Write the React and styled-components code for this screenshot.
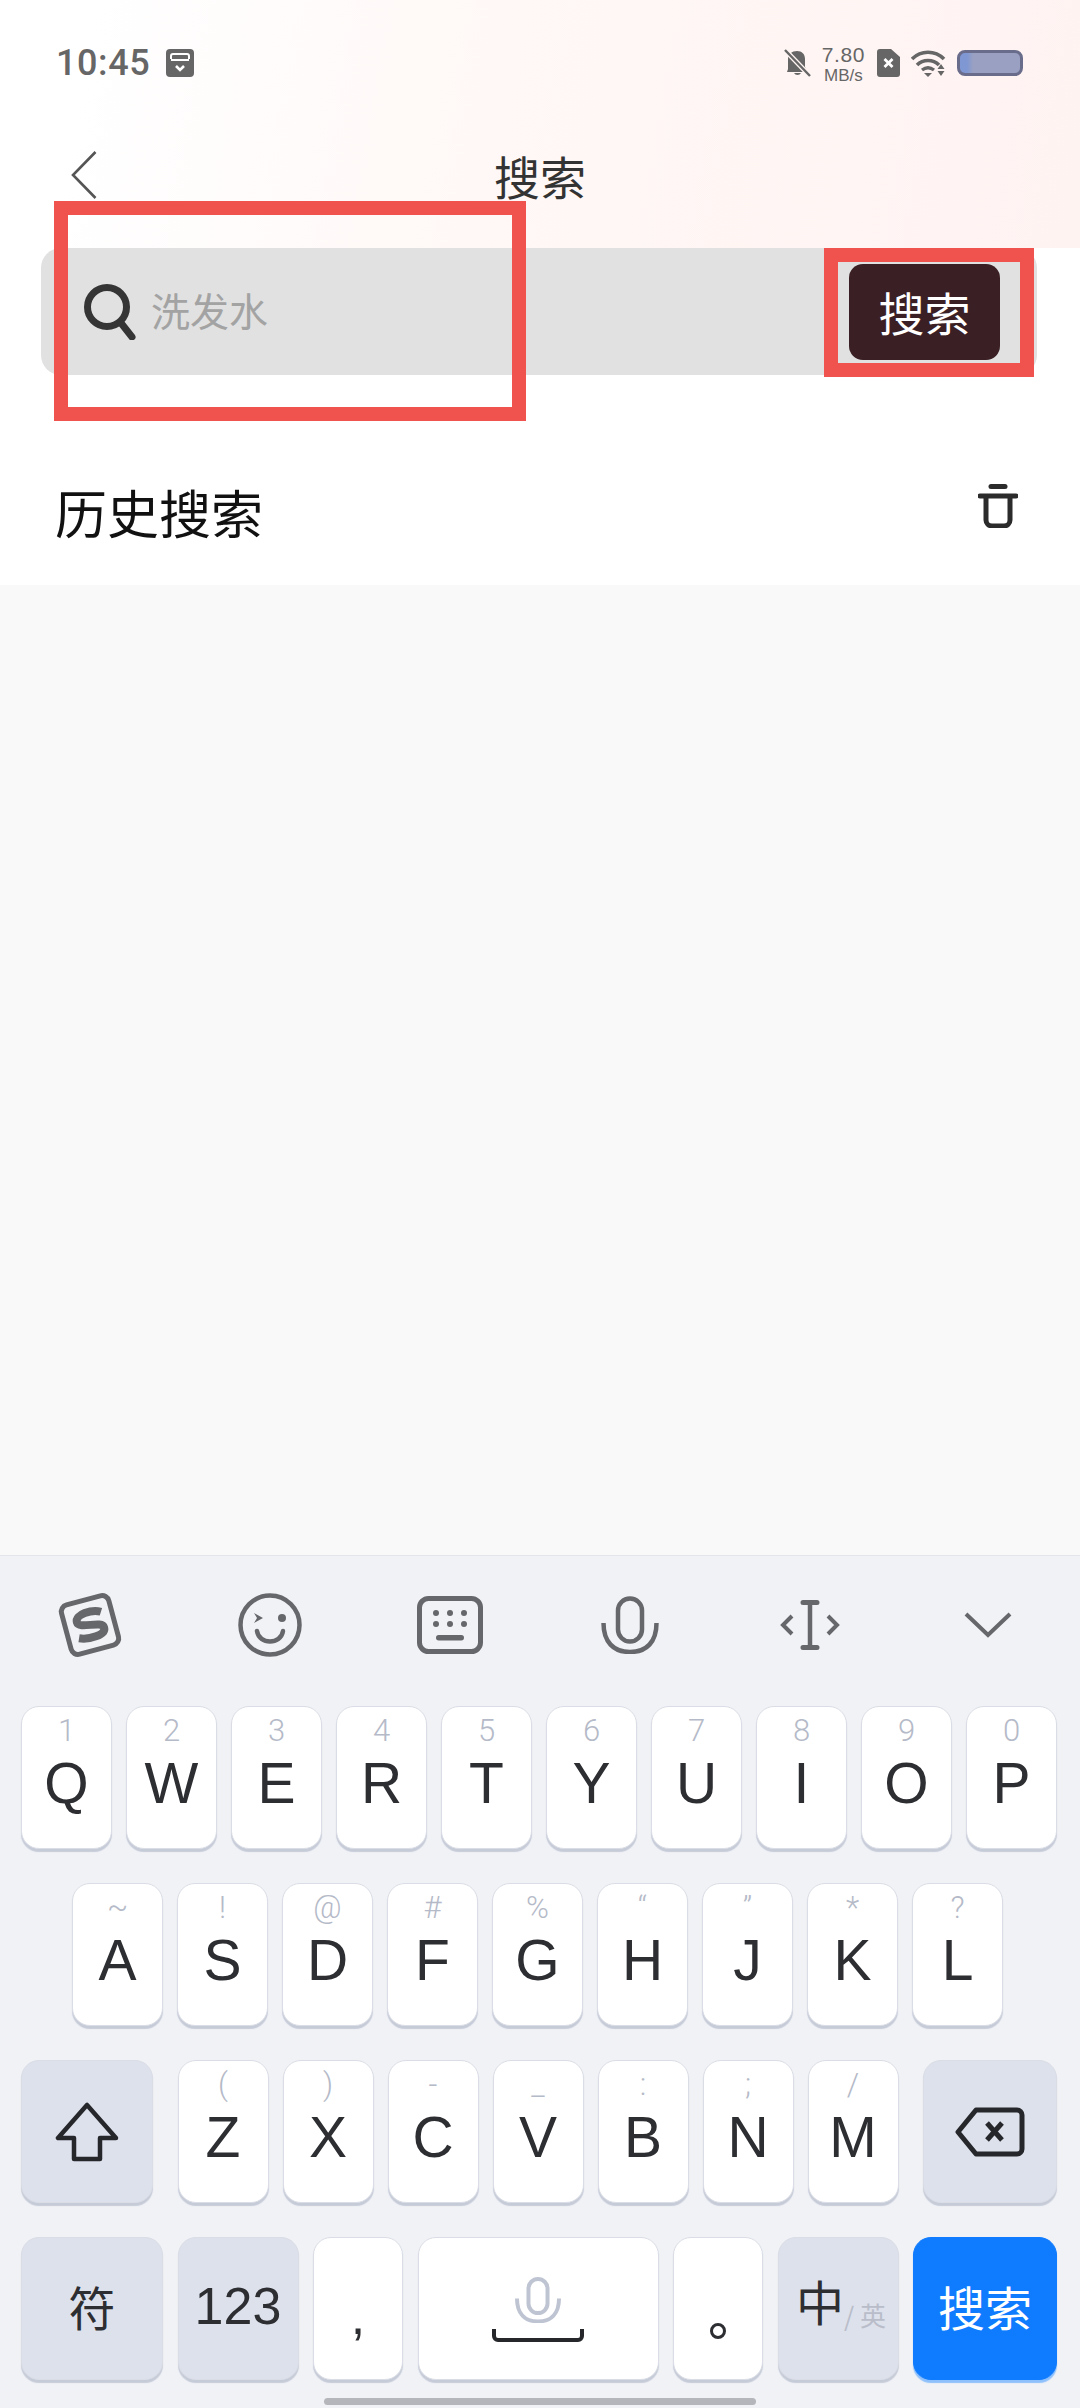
import React from "react";
import styled, { createGlobalStyle } from "styled-components";

const GlobalStyle = createGlobalStyle`
  html, body {
    margin: 0;
    padding: 0;
    background: #fff;
  }
  * {
    box-sizing: border-box;
  }
`;

const CJK = `"Noto Sans CJK SC", "Noto Sans", sans-serif`;
const LATIN = `"Liberation Sans", "Noto Sans CJK SC", sans-serif`;

const Page = styled.div`
  position: relative;
  width: 1080px;
  height: 2408px;
  display: flex;
  flex-direction: column;
  overflow: hidden;
  background: #f9f9f9;
  font-family: ${CJK};
`;

const Header = styled.header`
  height: 248px;
  flex: none;
  background: linear-gradient(100deg, #ffffff 8%, #fff8f6 45%, #fff3f2 100%);
`;

const StatusBar = styled.div`
  height: 126px;
  padding: 47px 57px 0 56px;
  display: flex;
  align-items: flex-start;
  justify-content: space-between;
  color: #666;
`;

const StatusLeft = styled.div`
  display: flex;
  align-items: center;
  gap: 16px;
`;

const Time = styled.span`
  font-family: Roboto, sans-serif;
  font-size: 36px;
  line-height: 32px;
  font-weight: 500;
  letter-spacing: 0.6px;
`;

const StatusRight = styled.div`
  display: flex;
  align-items: center;
  height: 32px;
`;

const Speed = styled.div`
  display: flex;
  flex-direction: column;
  align-items: center;
  margin: 2px 12px 0 11px;
  font-family: "Liberation Sans", sans-serif;
  font-size: 21px;
  line-height: 21px;
  letter-spacing: 0.6px;
  color: #666;
`;

const SpeedUnit = styled.span`
  margin-top: 1px;
  font-size: 17px;
  line-height: 19px;
  letter-spacing: 0;
`;

const StatusGap = styled.span`
  width: 11px;
`;

const Battery = styled.div`
  width: 66px;
  height: 26px;
  margin-left: 11px;
  border: 3px solid #6a6c8c;
  border-radius: 8px;
  background: linear-gradient(90deg, #7f97d3 0 12%, #9aa0c2 22%);
`;

const NavBar = styled.div`
  height: 122px;
  padding: 0 0 0 71px;
  display: flex;
  align-items: flex-start;
`;

const BackWrap = styled.div`
  margin-top: 25px;
  line-height: 0;
`;

const Title = styled.h1`
  flex: 1;
  margin: 19px 97px 0 0;
  text-align: center;
  font-size: 46px;
  line-height: 60px;
  font-weight: 400;
  color: #333;
`;

const Body = styled.section`
  height: 337px;
  flex: none;
  background: #fff;
`;

const SearchBar = styled.div`
  height: 127px;
  margin: 0 43px 0 41px;
  padding: 0 37px 0 43px;
  display: flex;
  align-items: center;
  border-radius: 20px;
  background: #e1e1e1;
`;

const Placeholder = styled.span`
  flex: 1;
  margin: 0 0 5px 15px;
  font-size: 39px;
  line-height: 54px;
  color: #a3a3a3;
`;

const SearchButton = styled.button`
  width: 151px;
  height: 96px;
  margin-top: 1px;
  padding: 0 0 2px 0;
  border: none;
  border-radius: 14px;
  background: #3a2025;
  color: #fff;
  font-family: ${CJK};
  font-size: 46px;
`;

const HistoryRow = styled.div`
  padding: 0 62px 0 55px;
  height: 210px;
  display: flex;
  align-items: flex-start;
  justify-content: space-between;
`;

const HistoryTitle = styled.h2`
  margin: 99px 0 0 0;
  font-size: 52px;
  line-height: 76px;
  font-weight: 400;
  color: #111;
`;

const TrashIcon = styled.svg`
  margin-top: 109px;
`;

const Filler = styled.div`
  flex: 1;
`;

const Keyboard = styled.div`
  flex: none;
  height: 853px;
  border-top: 1px solid #e3e5ea;
  background: #f0f2f6;
  position: relative;
`;

const Toolbar = styled.div`
  height: 150px;
  display: grid;
  grid-template-columns: repeat(6, 180px);
  align-items: center;
  justify-items: center;
  padding-bottom: 12px;
`;

const ChevronWrap = styled.div`
  margin-right: 4px;
  line-height: 0;
`;

const Rows = styled.div`
  display: flex;
  flex-direction: column;
  gap: 34px;
  padding: 0 23px 0 21px;
`;

const Row = styled.div`
  display: flex;
  justify-content: ${(p) => p.$justify || "flex-start"};
  gap: ${(p) => p.$gap || 14}px;
  height: 143px;
  padding-right: ${(p) => p.$pr || 0}px;
`;

const Key = styled.div`
  flex: none;
  width: ${(p) => p.$w || 91}px;
  height: 143px;
  display: flex;
  flex-direction: column;
  align-items: center;
  border: 1px solid ${(p) => (p.$blue ? "#0f7bff" : "#dadde5")};
  border-radius: 18px;
  background: ${(p) => (p.$blue ? "#0f7bff" : p.$dark ? "#dde1ec" : "#fff")};
  box-shadow: 0 3px 1px ${(p) => (p.$blue ? "#8ec0fb" : "#c6cbd8")};
  color: #2d2e32;
`;

const CenterKey = styled(Key)`
  justify-content: center;
`;

const SubLabel = styled.span`
  margin-top: 9px;
  height: 30px;
  font-family: Roboto, sans-serif;
  font-weight: 300;
  font-size: 31px;
  line-height: 30px;
  color: #b5bac8;
`;

const Letter = styled.span`
  margin-top: 8px;
  font-family: ${LATIN};
  font-size: 57px;
  line-height: 58px;
`;

const SymbolKeyLabel = styled.span`
  margin-bottom: 6px;
  font-family: ${(p) => (p.$latin ? LATIN : CJK)};
  font-size: ${(p) => p.$size || 47}px;
  line-height: 60px;
  color: ${(p) => p.$color || "#2d2e32"};
`;

const Punct = styled.span`
  margin-top: ${(p) => p.$top}px;
  font-family: ${LATIN};
  font-size: 52px;
  line-height: 40px;
`;

const PeriodMark = styled.svg`
  margin-top: 84px;
`;

const LangLabel = styled.div`
  display: flex;
  align-items: flex-end;
  margin: 0 0 18px 6px;
`;

const LangMain = styled.span`
  font-size: 48px;
  line-height: 60px;
  color: #2d2e32;
`;

const LangSub = styled.span`
  font-size: 26px;
  line-height: 34px;
  margin-bottom: -2px;
  color: #b9bdc9;
`;

const SpaceMark = styled.div`
  display: flex;
  flex-direction: column;
  align-items: center;
  gap: 6px;
  margin-top: 39px;
`;

const HomeBar = styled.div`
  position: absolute;
  left: 324px;
  bottom: 3px;
  width: 432px;
  height: 7px;
  border-radius: 4px;
  background: #b5b6bb;
`;

const Annotation = styled.div`
  position: absolute;
  left: ${(p) => p.$x}px;
  top: ${(p) => p.$y}px;
  width: ${(p) => p.$w}px;
  height: ${(p) => p.$h}px;
  border: 14px solid #f0534e;
  pointer-events: none;
`;

const GRAY = "#66676b";

const SaveIcon = () => (
  <svg width="28" height="28" viewBox="0 0 28 28">
    <rect x="0" y="0" width="28" height="28" rx="4" fill="#666" />
    <path d="M5 10V7a2 2 0 0 1 2-2h14a2 2 0 0 1 2 2v3" fill="none" stroke="#fff" strokeWidth="2" />
    <path d="M5 11h18" stroke="#fff" strokeWidth="2" />
    <path d="M10 17l4 4 4-4" fill="none" stroke="#fff" strokeWidth="2.6" />
  </svg>
);

const MuteBell = () => (
  <svg width="27" height="30" viewBox="0 0 27 30">
    <path d="M13 3c5 0 8 3 8 8v8l3 5H3l1-3V11c0-5 4-8 9-8z" fill="#666" />
    <path d="M10 25a4 4 0 0 0 7 0z" fill="#666" />
    <path d="M1 2l25 26" stroke="#fff5f3" strokeWidth="5" />
    <path d="M1 2l25 26" stroke="#666" strokeWidth="2.4" />
  </svg>
);

const SimIcon = () => (
  <svg width="23" height="28" viewBox="0 0 23 28">
    <path d="M3 0h11l9 8v17a3 3 0 0 1-3 3H3a3 3 0 0 1-3-3V3a3 3 0 0 1 3-3z" fill="#666" />
    <path d="M7.500 10l8 8M15.500 10l-8 8" stroke="#fff" strokeWidth="2.8" />
  </svg>
);

const WifiIcon = () => (
  <svg width="35" height="27" viewBox="0 0 35 27">
    <path d="M1 9c9-9 23-9 32 0" fill="none" stroke="#666" strokeWidth="3.6" />
    <path d="M6 15c6-6 16-6 22 0" fill="none" stroke="#666" strokeWidth="3.6" />
    <path d="M11 20c4-3 8-3 12 0" fill="none" stroke="#666" strokeWidth="3.4" />
    <path d="M13 23h8l-4 4z" fill="#666" />
    <path d="M30 14l3.500 5h-7zM26.500 21h7L30 26z" fill="#666" />
  </svg>
);

const BackIcon = () => (
  <svg width="26" height="48" viewBox="0 0 26 48">
    <path d="M24.500 1L2 24l22.500 23" fill="none" stroke="#555" strokeWidth="2.6" />
  </svg>
);

const SearchIcon = () => (
  <svg width="52" height="56" viewBox="0 0 52 56">
    <circle cx="23" cy="23" r="19.500" fill="none" stroke="#353535" strokeWidth="7" />
    <path d="M37 39l11 14" stroke="#353535" strokeWidth="7" strokeLinecap="round" />
  </svg>
);

const TrashSvg = () => (
  <TrashIcon width="40" height="44" viewBox="0 0 40 44">
    <path d="M13 2.500h14" stroke="#2b2b2b" strokeWidth="5" strokeLinecap="round" />
    <path d="M2 12h36" stroke="#2b2b2b" strokeWidth="5" strokeLinecap="round" />
    <path d="M8 12v24a6 6 0 0 0 6 6h12a6 6 0 0 0 6-6V12" fill="none" stroke="#2b2b2b" strokeWidth="5" />
  </TrashIcon>
);

const SogouIcon = () => (
  <svg width="72" height="68" viewBox="0 0 72 68">
    <g transform="rotate(-15 36 34)">
      <rect x="11.500" y="8.500" width="49" height="51" rx="7" fill="none" stroke={GRAY} strokeWidth="5" />
      <path d="M50 24C42 19 24 20 24 28c0 8 25 4 25 12 0 8-18 8-27 4" fill="none" stroke={GRAY} strokeWidth="8" />
    </g>
  </svg>
);

const WinkIcon = () => (
  <svg width="64" height="64" viewBox="0 0 64 64">
    <circle cx="32" cy="32" r="29.500" fill="none" stroke={GRAY} strokeWidth="4.500" />
    <path d="M16 20l9 5-9 5 3-5z" fill={GRAY} />
    <circle cx="44" cy="25" r="4" fill={GRAY} />
    <path d="M19 38c2 14 24 14 26 0" fill="none" stroke={GRAY} strokeWidth="4.500" strokeLinecap="round" />
  </svg>
);

const KeyboardIcon = () => (
  <svg width="66" height="58" viewBox="0 0 66 58">
    <rect x="2.500" y="2.500" width="61" height="53" rx="9" fill="none" stroke={GRAY} strokeWidth="5" />
    {[19, 33, 47].map((x) => (
      <React.Fragment key={x}>
        <circle cx={x} cy="17" r="3" fill={GRAY} />
        <circle cx={x} cy="28" r="3" fill={GRAY} />
      </React.Fragment>
    ))}
    <rect x="19" y="39" width="28" height="5.500" rx="2.700" fill={GRAY} />
  </svg>
);

const MicIcon = ({ color = GRAY, w = 58, h = 58, sw = 4.500 }) => (
  <svg width={w} height={h} viewBox="0 0 58 58">
    <rect x="17" y="2.500" width="24" height="43" rx="12" fill="none" stroke={color} strokeWidth={sw} />
    <path d="M2.500 27c0 19 10 29 26.500 29S55.500 46 55.500 27" fill="none" stroke={color} strokeWidth={sw} />
  </svg>
);

const CursorIcon = () => (
  <svg width="60" height="50" viewBox="0 0 60 50">
    <path d="M23 2.500h14M23 47.500h14" stroke={GRAY} strokeWidth="5" strokeLinecap="round" />
    <path d="M30 3v44" stroke={GRAY} strokeWidth="4.500" />
    <path d="M12 16l-9 9 9 9M48 16l9 9-9 9" fill="none" stroke={GRAY} strokeWidth="4" />
  </svg>
);

const ChevronIcon = () => (
  <svg width="48" height="26" viewBox="0 0 48 26">
    <path d="M2 2l22 21L46 2" fill="none" stroke={GRAY} strokeWidth="4" />
  </svg>
);

const ShiftIcon = () => (
  <svg width="64" height="60" viewBox="0 0 64 60">
    <path d="M32 3L3 36h16v21h26V36h16z" fill="none" stroke="#26272b" strokeWidth="4.500" strokeLinejoin="round" />
  </svg>
);

const BackspaceIcon = () => (
  <svg width="70" height="50" viewBox="0 0 70 50">
    <path d="M21 3h41a5 5 0 0 1 5 5v34a5 5 0 0 1-5 5H21L3 25z" fill="none" stroke="#26272b" strokeWidth="5" strokeLinejoin="round" />
    <path d="M32 16l15 17M47 16L32 33" stroke="#26272b" strokeWidth="5" />
  </svg>
);

const SpaceBracket = () => (
  <svg width="92" height="14" viewBox="0 0 92 14">
    <path d="M2 0v7a4 4 0 0 0 4 4h80a4 4 0 0 0 4-4V0" fill="none" stroke="#26272b" strokeWidth="4" />
  </svg>
);

const ROW_1 = [["1", "Q"], ["2", "W"], ["3", "E"], ["4", "R"], ["5", "T"], ["6", "Y"], ["7", "U"], ["8", "I"], ["9", "O"], ["0", "P"]];
const ROW_2 = [["~", "A"], ["!", "S"], ["@", "D"], ["#", "F"], ["%", "G"], ["“", "H"], ["”", "J"], ["*", "K"], ["?", "L"]];
const ROW_3 = [["(", "Z"], [")", "X"], ["-", "C"], ["_", "V"], [":", "B"], [";", "N"], ["/", "M"]];

const LetterKey = ({ sub, label }) => (
  <Key>
    <SubLabel>{sub}</SubLabel>
    <Letter>{label}</Letter>
  </Key>
);

export default function App() {
  return (
    <Page>
      <GlobalStyle />
      <Header>
        <StatusBar>
          <StatusLeft>
            <Time>10:45</Time>
            <SaveIcon />
          </StatusLeft>
          <StatusRight>
            <MuteBell />
            <Speed>
              <span>7.80</span>
              <SpeedUnit>MB/s</SpeedUnit>
            </Speed>
            <SimIcon />
            <StatusGap />
            <WifiIcon />
            <Battery />
          </StatusRight>
        </StatusBar>
        <NavBar>
          <BackWrap>
            <BackIcon />
          </BackWrap>
          <Title>搜索</Title>
        </NavBar>
      </Header>

      <Body>
        <SearchBar>
          <SearchIcon />
          <Placeholder>洗发水</Placeholder>
          <SearchButton>搜索</SearchButton>
        </SearchBar>
        <HistoryRow>
          <HistoryTitle>历史搜索</HistoryTitle>
          <TrashSvg />
        </HistoryRow>
      </Body>

      <Filler />

      <Keyboard>
        <Toolbar>
          <SogouIcon />
          <WinkIcon />
          <KeyboardIcon />
          <MicIcon />
          <CursorIcon />
          <ChevronWrap>
            <ChevronIcon />
          </ChevronWrap>
        </Toolbar>
        <Rows>
          <Row>
            {ROW_1.map(([sub, label]) => (
              <LetterKey key={label} sub={sub} label={label} />
            ))}
          </Row>
          <Row $justify="center" $pr={3}>
            {ROW_2.map(([sub, label]) => (
              <LetterKey key={label} sub={sub} label={label} />
            ))}
          </Row>
          <Row $justify="space-between">
            <CenterKey $w={132} $dark>
              <ShiftIcon />
            </CenterKey>
            <Row>
              {ROW_3.map(([sub, label]) => (
                <LetterKey key={label} sub={sub} label={label} />
              ))}
            </Row>
            <CenterKey $w={134} $dark>
              <BackspaceIcon />
            </CenterKey>
          </Row>
          <Row $gap={14.5}>
            <CenterKey $w={142} $dark>
              <SymbolKeyLabel>符</SymbolKeyLabel>
            </CenterKey>
            <CenterKey $w={121} $dark>
              <SymbolKeyLabel $latin $size={52}>123</SymbolKeyLabel>
            </CenterKey>
            <Key $w={90}>
              <Punct $top={58}>,</Punct>
            </Key>
            <Key $w={241}>
              <SpaceMark>
                <MicIcon color="#bec4d2" w={46} h={46} sw={5} />
                <SpaceBracket />
              </SpaceMark>
            </Key>
            <Key $w={90}>
              <PeriodMark width="18" height="18" viewBox="0 0 18 18">
                <circle cx="9" cy="9" r="6.500" fill="none" stroke="#2d2e32" strokeWidth="3" />
              </PeriodMark>
            </Key>
            <CenterKey $w={121} $dark>
              <LangLabel>
                <LangMain>中</LangMain>
                <LangSub>/ 英</LangSub>
              </LangLabel>
            </CenterKey>
            <CenterKey $w={144} $blue>
              <SymbolKeyLabel $color="#fff">搜索</SymbolKeyLabel>
            </CenterKey>
          </Row>
        </Rows>
        <HomeBar />
      </Keyboard>

      <Annotation $x={54} $y={201} $w={472} $h={220} />
      <Annotation $x={824} $y={248} $w={210} $h={129} />
    </Page>
  );
}
